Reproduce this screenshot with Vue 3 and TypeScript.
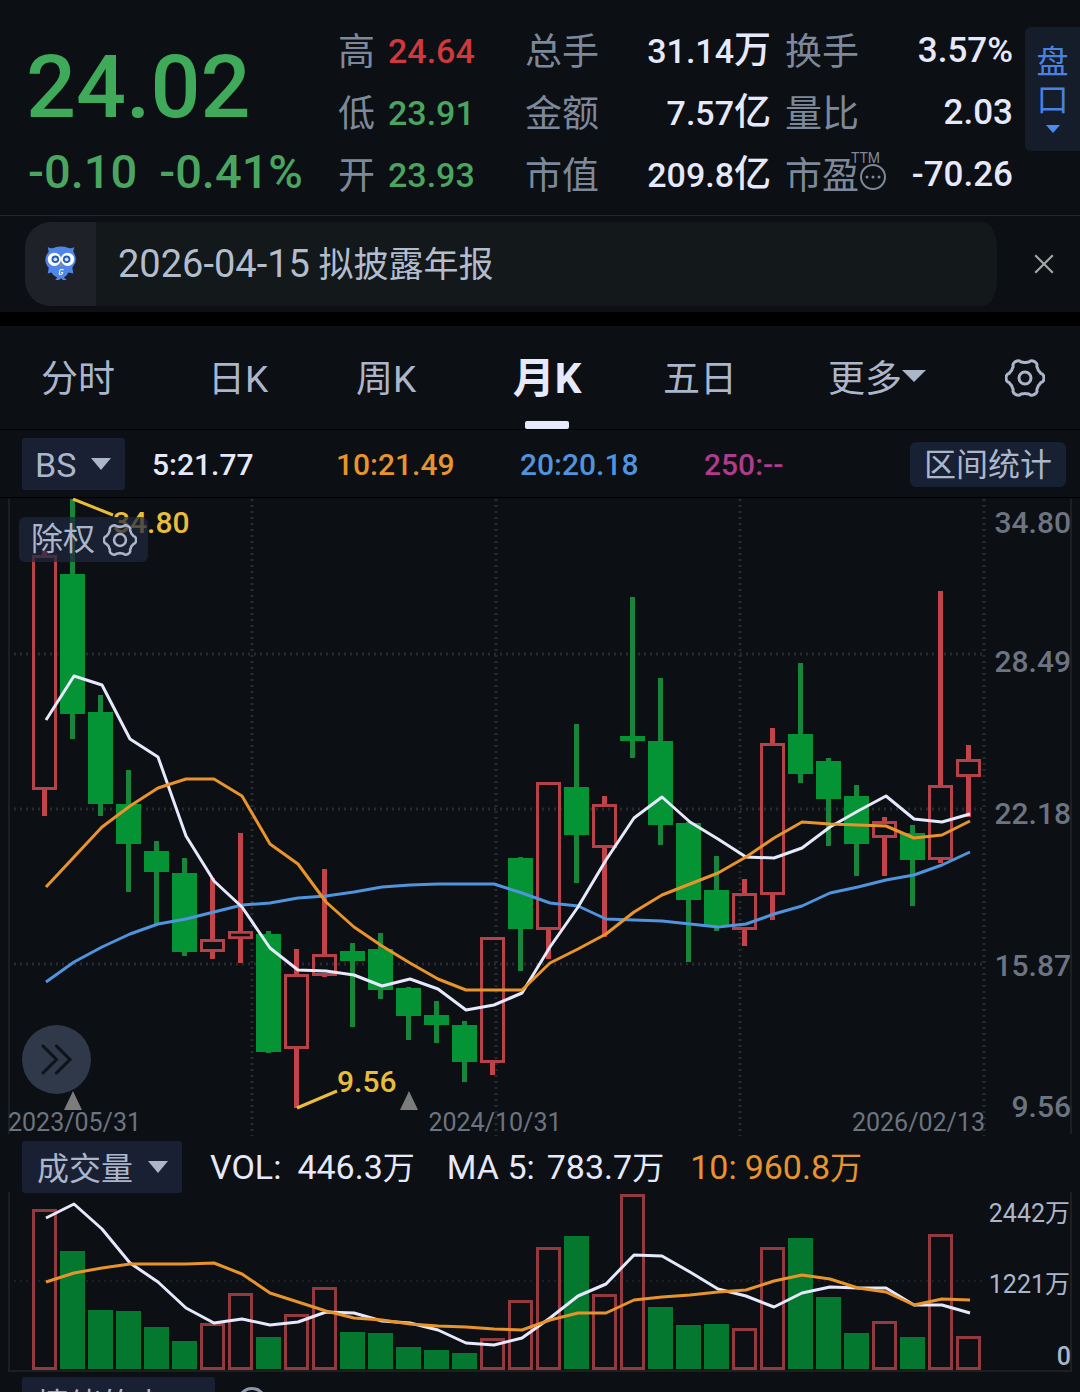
<script setup lang="ts">
import { ref } from 'vue'

type Candle = [up: 0 | 1, high: number, top: number, bottom: number, low: number]
type Volume = [up: 0 | 1, top: number]

const STEP = 28
const centre = (i: number): number => 44 + STEP * i

const candles: Candle[] = [
  [1, 551, 555, 790, 816], [0, 499, 574, 714, 739], [0, 695, 712, 804, 816], [0, 770, 804, 844, 892],
  [0, 841, 851, 872, 924], [0, 858, 873, 952, 956], [1, 878, 939, 952, 959], [1, 833, 931, 939, 963],
  [0, 931, 934, 1052, 1053], [1, 949, 974, 1049, 1108], [1, 869, 954, 976, 977], [0, 943, 951, 961, 1027],
  [0, 933, 949, 990, 999], [0, 987, 988, 1016, 1040], [0, 1001, 1015, 1025, 1043], [0, 1021, 1025, 1062, 1082],
  [1, 937, 937, 1063, 1075], [0, 857, 858, 929, 971], [1, 782, 782, 930, 959], [0, 724, 787, 835, 883],
  [1, 796, 804, 848, 937], [0, 597, 736, 741, 758], [0, 678, 741, 825, 845], [0, 822, 823, 900, 962],
  [0, 856, 890, 925, 931], [1, 879, 893, 930, 946], [1, 728, 743, 895, 920], [0, 663, 734, 774, 783],
  [0, 758, 761, 799, 846], [0, 785, 796, 844, 876], [1, 817, 821, 838, 876], [0, 825, 833, 860, 906],
  [1, 591, 785, 860, 863], [1, 745, 759, 777, 817],
]

const volumes: Volume[] = [
  [1, 1209], [0, 1251], [0, 1310], [0, 1311], [0, 1327], [0, 1341], [1, 1323], [1, 1293], [0, 1337],
  [1, 1314], [1, 1287], [0, 1332], [0, 1333], [0, 1347], [0, 1350], [0, 1353], [1, 1338], [1, 1300],
  [1, 1247], [0, 1236], [1, 1294], [1, 1194], [0, 1307], [0, 1325], [0, 1324], [1, 1328], [1, 1247],
  [0, 1238], [0, 1297], [0, 1333], [1, 1321], [0, 1337], [1, 1234], [1, 1336],
]

const line = (ys: number[]): string => ys.map((y, i) => `${46 + STEP * i},${y}`).join(' ')

const priceLines = [
  { name: 'ma20', points: line([982, 962, 947, 934, 924, 919, 912, 905, 903, 898, 896, 892, 887, 885, 884, 884, 884, 893, 903, 906, 919, 920, 921, 924, 927, 924, 914, 906, 893, 887, 880, 875, 865, 852]) },
  { name: 'ma5', points: line([720, 676, 685, 739, 757, 836, 881, 907, 948, 970, 971, 975, 986, 979, 989, 1010, 1005, 993, 947, 907, 860, 818, 797, 822, 839, 857, 858, 848, 827, 811, 796, 819, 822, 814]) },
  { name: 'ma10', points: line([887, 857, 827, 806, 788, 779, 779, 796, 844, 864, 902, 927, 946, 963, 979, 990, 990, 990, 963, 949, 934, 912, 895, 884, 873, 857, 838, 822, 824, 825, 826, 838, 835, 821]) },
]

const volumeLines = [
  { name: 'ma5', points: line([1218, 1204, 1229, 1263, 1282, 1308, 1323, 1319, 1325, 1322, 1312, 1313, 1321, 1323, 1330, 1343, 1345, 1338, 1318, 1296, 1284, 1255, 1256, 1272, 1289, 1296, 1307, 1293, 1287, 1288, 1288, 1305, 1305, 1313]) },
  { name: 'ma10', points: line([1282, 1273, 1268, 1264, 1264, 1264, 1263, 1274, 1293, 1302, 1311, 1318, 1320, 1324, 1326, 1327, 1329, 1330, 1320, 1313, 1313, 1300, 1297, 1295, 1292, 1290, 1281, 1275, 1279, 1288, 1292, 1305, 1299, 1300]) },
]

/* Outline of a hollow box, 3 units thick */
const hollow = (i: number, top: number, bottom: number): string => {
  const x = centre(i) - 12
  const t = Math.min(3, (bottom - top) / 3)
  return `M${x} ${top}h25v${bottom - top}h-25zM${x + 3} ${top + t}v${bottom - top - 2 * t}h19v${-(bottom - top - 2 * t)}z`
}

/* Six-lobed gear around (20, 20) */
const polar = (deg: number, r: number): string => {
  const a = (deg * Math.PI) / 180
  return `${(20 + r * Math.cos(a)).toFixed(2)} ${(20 + r * Math.sin(a)).toFixed(2)}`
}
const gear = 'M' + polar(-12, 18) + [0, 60, 120, 180, 240, 300]
  .map((a) => `Q${polar(a - 8, 19)} ${polar(a, 19)}Q${polar(a + 8, 19)} ${polar(a + 12, 18)}Q${polar(a + 16, 16)} ${polar(a + 22, 16)}Q${polar(a + 30, 15)} ${polar(a + 38, 16)}Q${polar(a + 44, 16)} ${polar(a + 48, 18)}`)
  .join('') + 'Z'

const priceScale = [
  { text: '34.80', y: 533 }, { text: '28.49', y: 672 }, { text: '22.18', y: 824 },
  { text: '15.87', y: 976 }, { text: '9.56', y: 1117 },
]

const range = [
  { label: '高', value: '24.64', cls: 'up' },
  { label: '低', value: '23.91', cls: 'down' },
  { label: '开', value: '23.93', cls: 'down' },
]
const totals = [
  { label: '总手', value: '31.14', unit: '万' },
  { label: '金额', value: '7.57', unit: '亿' },
  { label: '市值', value: '209.8', unit: '亿' },
]
const ratios = [
  { label: '换手', value: '3.57%', ttm: false },
  { label: '量比', value: '2.03', ttm: false },
  { label: '市盈', value: '-70.26', ttm: true },
]
const tabs = ['分时', '日K', '周K', '月K', '五日']
const activeTab = ref('月K')
const noticeOpen = ref(true)
const overlay = ref('BS')
const indicator = ref('成交量')
const sentiment = ref('情绪的点')
</script>

<template>
  <main class="quote">
    <header class="summary">
      <div class="price">
        <strong class="last">24.02</strong>
        <div class="change"><span>-0.10</span><span>-0.41%</span></div>
      </div>
      <dl class="stats range">
        <div v-for="s in range" :key="s.label"><dt>{{ s.label }}</dt><dd :class="s.cls">{{ s.value }}</dd></div>
      </dl>
      <dl class="stats totals">
        <div v-for="s in totals" :key="s.label"><dt>{{ s.label }}</dt><dd>{{ s.value }}<span class="unit">{{ s.unit }}</span></dd></div>
      </dl>
      <dl class="stats ratios">
        <div v-for="s in ratios" :key="s.label">
          <dt>{{ s.label }}<template v-if="s.ttm"><svg class="more-dots" viewBox="0 0 28 28" aria-hidden="true"><circle cx="14" cy="14" r="12" /><path d="M8 14h0M14 14h0M20 14h0" /></svg><small class="ttm">TTM</small></template></dt>
          <dd>{{ s.value }}</dd>
        </div>
      </dl>
      <button class="depth" type="button">
        <span>盘</span><span>口</span>
        <svg viewBox="0 0 14 8" aria-hidden="true"><path d="M0 0h14l-7 8z" /></svg>
      </button>
    </header>

    <section v-if="noticeOpen" class="notice">
      <div class="pill">
        <span class="owl">
          <svg viewBox="0 0 36 40" aria-hidden="true">
            <path class="body" d="M4 2q3 2 6 1q8-3 16 0q3 1 6-1l-1 5q4 6 2 12q-2 3-3 5l1 6l-5-1q-2 4-5 5l3 3h-4l-2-2l-2 2h-4l2-3q-4-1-6-5l-4 1l1-6q-2-2-3-5q-2-6 3-12z" />
            <circle class="rim" cx="11" cy="15" r="7" /><circle class="rim" cx="25" cy="15" r="7" />
            <circle class="iris" cx="12" cy="15" r="4" /><circle class="iris" cx="24" cy="15" r="4" />
            <circle class="glint" cx="12" cy="15" r="2" /><circle class="glint" cx="24" cy="15" r="2" />
            <path class="beak" d="M16 20h4l-2 4z" />
            <path class="mark" d="M21 26h-4l-1 5h3l1-2h-2" />
          </svg>
        </span>
        <p><time datetime="2026-04-15">2026-04-15</time> 拟披露年报</p>
      </div>
      <button class="close" type="button" aria-label="关闭" @click="noticeOpen = false">
        <svg viewBox="0 0 20 20" aria-hidden="true"><path d="M2 2l16 16M18 2L2 18" /></svg>
      </button>
    </section>

    <nav class="tabs">
      <button v-for="t in tabs" :key="t" type="button" :class="{ active: t === activeTab }" @click="activeTab = t">{{ t }}</button>
      <button type="button">更多<svg class="caret" viewBox="0 0 24 12" aria-hidden="true"><path d="M0 0h24l-12 12z" /></svg></button>
      <button class="settings" type="button" aria-label="设置">
        <svg class="gear" viewBox="0 0 40 40" aria-hidden="true"><path :d="gear" /><circle cx="20" cy="20" r="6" /></svg>
      </button>
    </nav>

    <section class="averages">
      <label class="picker bs">
        <select v-model="overlay" aria-label="叠加"><option>BS</option></select>
        <svg viewBox="0 0 20 12" aria-hidden="true"><path d="M0 0h20l-10 12z" /></svg>
      </label>
      <ul>
        <li class="c5">5:21.77</li>
        <li class="c10">10:21.49</li>
        <li class="c20">20:20.18</li>
        <li class="c250">250:--</li>
      </ul>
      <button class="interval" type="button">区间统计</button>
    </section>

    <section class="chart">
      <svg viewBox="0 498 1080 638" role="img" aria-label="月K">
        <path class="frame" d="M9 499V1134M1071 499V1134" />
        <path class="grid" d="M14 654H984M14 809H984M14 964H984M252 499V1136M496 499V1136M740 499V1136M984 499V1136" />
        <g v-for="([up, high, top, bottom, low], i) in candles" :key="i" :class="up ? 'rise' : 'fall'">
          <path class="wick" :d="`M${centre(i) - 2} ${high}h5V${top}h-5zM${centre(i) - 2} ${bottom}h5V${low}h-5z`" />
          <path v-if="up" class="box" :d="hollow(i, top, bottom)" />
          <rect v-else class="box" :x="centre(i) - 12" :y="top" width="25" :height="bottom - top" />
        </g>
        <polyline v-for="l in priceLines" :key="l.name" :class="l.name" :points="l.points" />
        <path class="leader" d="M73 499L113 515M297 1108L337 1091" />
        <text class="extreme" x="113" y="533">34.80</text>
        <text class="extreme" x="337" y="1092">9.56</text>
        <path class="event" d="M73 1091l9 19h-18zM409 1091l9 19h-18z" />
        <text v-for="p in priceScale" :key="p.text" class="scale" x="1071" :y="p.y">{{ p.text }}</text>
        <text class="date" x="8" y="1131">2023/05/31</text>
        <text class="date middle" x="495" y="1131">2024/10/31</text>
        <text class="date end" x="985" y="1131">2026/02/13</text>
      </svg>
      <button class="adjust" type="button">除权<svg class="gear" viewBox="0 0 40 40" aria-hidden="true"><path :d="gear" /><circle cx="20" cy="20" r="7" /></svg></button>
      <button class="expand" type="button" aria-label="展开">
        <svg viewBox="0 0 30 30" aria-hidden="true"><path d="M2 2l13 13L2 28M15 2l13 13L15 28" /></svg>
      </button>
    </section>

    <section class="volume-head">
      <label class="picker">
        <select v-model="indicator" aria-label="指标"><option>成交量</option></select>
        <svg viewBox="0 0 20 12" aria-hidden="true"><path d="M0 0h20l-10 12z" /></svg>
      </label>
      <p class="vol"><span>VOL:</span><span>446.3<span class="wan">万</span></span></p>
      <p class="vma5"><span>MA 5:</span><span>783.7<span class="wan">万</span></span></p>
      <p class="vma10"><span>10:</span><span>960.8<span class="wan">万</span></span></p>
    </section>

    <section class="chart">
      <svg viewBox="0 1192 1080 180" role="img" aria-label="成交量">
        <path class="frame" d="M9 1192V1371H1071V1192" />
        <path class="grid faint" d="M14 1281H984" />
        <g v-for="([up, top], i) in volumes" :key="i" :class="up ? 'rise' : 'fall'">
          <path v-if="up" class="bar" :d="hollow(i, top, 1370)" />
          <rect v-else class="bar" :x="centre(i) - 12" :y="top" width="25" :height="1369 - top" />
        </g>
        <polyline v-for="l in volumeLines" :key="l.name" :class="l.name" :points="l.points" />
        <text class="amount" x="1070" y="1222">2442万</text>
        <text class="amount" x="1070" y="1293">1221万</text>
        <text class="amount zero" x="1071" y="1365">0</text>
      </svg>
    </section>

    <section class="next">
      <label class="picker wide">
        <select v-model="sentiment" aria-label="副图指标"><option>情绪的点</option></select>
        <svg viewBox="0 0 20 12" aria-hidden="true"><path d="M0 0h20l-10 12z" /></svg>
      </label>
      <button class="help" type="button" aria-label="说明"></button>
    </section>
  </main>
</template>

<style>
body {
  background: #0c0f13;
}
</style>

<style scoped>
.quote {
  height: 100vh;
  overflow: hidden;
  background: #0c0f13;
  color: #e6e9fb;
  font-family: Roboto, "Noto Sans CJK SC", sans-serif;
}
button,
select {
  margin: 0;
  padding: 0;
  border: 0;
  background: none;
  color: inherit;
  font: inherit;
}
dl,
dd,
p,
ul {
  margin: 0;
  padding: 0;
  list-style: none;
}
svg {
  display: block;
  fill: none;
}

.summary {
  display: grid;
  grid-template-columns: 312fr 187fr 260fr 240fr 55px;
  box-sizing: border-box;
  height: 216px;
  padding-left: 26px;
  border-bottom: 1px solid #24282b;
}
.price {
  color: #3fab5a;
}
.last {
  display: block;
  padding-top: 32px;
  font-size: 88px;
  font-weight: 500;
  line-height: 110px;
}
.change {
  display: flex;
  gap: 22px;
  padding-left: 2px;
  font-size: 47px;
  font-weight: 500;
  line-height: 60px;
  color: #4aa560;
}
.stats {
  padding-top: 20px;
}
.stats div {
  display: flex;
  justify-content: space-between;
  height: 62px;
  line-height: 62px;
}
.stats dt {
  position: relative;
  display: flex;
  align-items: center;
  padding-top: 4px;
  font-size: 37px;
  line-height: 58px;
  color: #7d899a;
}
.stats dd {
  font-size: 34px;
  font-weight: 500;
}
.range div {
  justify-content: flex-start;
  gap: 13px;
}
.totals {
  padding-right: 14px;
}
.ratios {
  padding-right: 12px;
}
.ratios dd {
  font-size: 35px;
}
.up {
  color: #d0383c;
}
.down {
  color: #4aa560;
}
.unit {
  font-size: 37px;
}
.more-dots {
  width: 28px;
  height: 28px;
  stroke: #7d899a;
  stroke-width: 2;
}
.more-dots path {
  stroke-width: 3;
  stroke-linecap: round;
}
.ttm {
  position: absolute;
  top: 6px;
  right: 7px;
  font-size: 14px;
  line-height: 16px;
}
.depth {
  display: flex;
  flex-direction: column;
  align-items: center;
  align-self: start;
  margin-top: 27px;
  padding-top: 16px;
  height: 124px;
  border-radius: 6px 0 0 6px;
  background: #151c2a;
  color: #4a82e2;
  font-size: 32px;
  line-height: 38px;
}
.depth svg {
  width: 14px;
  margin-top: 6px;
  fill: #4a8cf5;
}

.notice {
  display: flex;
  align-items: center;
  box-sizing: border-box;
  height: 110px;
  padding: 6px 25px;
  border-bottom: 14px solid #000;
}
.pill {
  display: flex;
  flex: 1;
  height: 84px;
  overflow: hidden;
  border-radius: 26px 14px 14px 26px / 26px 26px 26px 26px;
  background: #13181b;
  color: #b3bdce;
}
.owl {
  display: grid;
  place-items: center;
  width: 71px;
  background: #1e2228;
}
.owl svg {
  width: 34px;
  height: 38px;
}
.body {
  fill: #4f86e8;
}
.rim {
  fill: #fff;
}
.iris {
  fill: #2459b8;
}
.glint {
  fill: #cfe0ff;
}
.beak {
  fill: #8d8a92;
}
.mark {
  stroke: #fff;
  stroke-width: 1;
}
.pill p {
  padding-left: 22px;
  font-size: 35px;
  line-height: 84px;
}
.pill time {
  font-size: 38px;
}
.close {
  width: 22px;
  margin-left: 36px;
}
.close svg {
  width: 22px;
  stroke: #a5a5a5;
  stroke-width: 2;
}

.tabs {
  display: grid;
  grid-template-columns: 156fr 164fr 132fr 190fr 116fr 238fr 58fr 26fr;
  height: 103px;
  border-bottom: 1px solid #000;
  color: #abb6cb;
  font-size: 37px;
}
.tabs button {
  position: relative;
  display: flex;
  align-items: center;
  justify-content: center;
  padding-bottom: 3px;
  white-space: nowrap;
}
.tabs .settings {
  padding: 0;
}
.tabs .active {
  padding-bottom: 6px;
  color: #e6e9fb;
  font-size: 42px;
  font-weight: 700;
}
.tabs .active::after {
  content: "";
  position: absolute;
  bottom: 0;
  width: 44px;
  height: 8px;
  border-radius: 2px;
  background: #e6e9fb;
}
.caret {
  width: 24px;
  fill: #abb6cb;
}
.gear {
  stroke: #abb6cb;
  stroke-width: 3;
}
.tabs .gear {
  width: 40px;
  height: 40px;
}

.averages {
  display: flex;
  align-items: center;
  box-sizing: border-box;
  height: 68px;
  padding: 0 14px 0 22px;
  border-bottom: 1px solid #000;
}
.picker {
  display: flex;
  align-items: center;
  position: relative;
  width: 160px;
  height: 52px;
  border-radius: 3px;
  background: #1a2033;
  color: #abb6cb;
}
.picker select {
  width: 100%;
  height: 52px;
  padding: 4px 0 0 15px;
  appearance: none;
  font-size: 32px;
}
.picker svg {
  position: absolute;
  right: 14px;
  width: 20px;
  fill: #abb6cb;
  pointer-events: none;
}
.picker.bs {
  width: 103px;
}
.picker.bs select {
  padding: 2px 0 0 13px;
  font-size: 34px;
}
.picker.wide {
  width: 193px;
}
.averages ul {
  display: grid;
  flex: 1;
  grid-template-columns: repeat(4, 1fr);
  margin: 2px 22px 0 27px;
  font-size: 30px;
  font-weight: 500;
}
.c10 {
  color: #e8942c;
}
.c20 {
  color: #4f94dd;
}
.c250 {
  color: #b03a8c;
}
.interval {
  width: 156px;
  height: 45px;
  margin-top: 2px;
  border-radius: 6px;
  background: #182033;
  color: #abb6cb;
  font-size: 32px;
  line-height: 47px;
}

.chart {
  position: relative;
}
.chart > svg {
  width: 100%;
}
.frame {
  stroke: #1c2025;
  stroke-width: 2;
}
.grid {
  stroke: #272a2f;
  stroke-width: 3;
  stroke-dasharray: 2 4;
}
.faint {
  stroke: #1c2024;
  stroke-width: 2;
}
.rise .wick {
  fill: #c2444a;
}
.rise .box {
  fill: #b44248;
}
.fall .wick {
  fill: #17853c;
}
.fall .box {
  fill: #049335;
}
.rise .bar {
  fill: #933a40;
}
.fall .bar {
  fill: #04782e;
}
polyline {
  stroke-width: 3;
  stroke-linejoin: round;
}
.ma5 {
  stroke: #e6e9fb;
}
.ma10 {
  stroke: #e8942c;
}
.ma20 {
  stroke: #4f94dd;
}
.leader {
  stroke: #e8bd3c;
  stroke-width: 3;
}
.extreme {
  fill: #e8bd3c;
  font-size: 30px;
  font-weight: 500;
}
.event {
  fill: #7c7c7c;
}
.scale {
  fill: #6c7481;
  font-size: 30px;
  font-weight: 500;
  text-anchor: end;
}
.date {
  fill: #6c7481;
  font-size: 25px;
}
.middle {
  text-anchor: middle;
}
.end {
  text-anchor: end;
}
.amount {
  fill: #abb6cb;
  font-size: 25px;
  text-anchor: end;
}
.zero {
  font-weight: 500;
}
.adjust {
  position: absolute;
  top: 19px;
  left: 19px;
  display: flex;
  align-items: center;
  gap: 8px;
  height: 45px;
  padding: 0 11px 0 12px;
  border-radius: 6px;
  background: rgba(30, 39, 62, 0.72);
  color: #abb6cb;
  font-size: 32px;
  line-height: 49px;
}
.adjust .gear {
  width: 34px;
  height: 34px;
}
.expand {
  position: absolute;
  top: 527px;
  left: 22px;
  display: grid;
  place-items: center;
  width: 69px;
  height: 69px;
  border-radius: 50%;
  background: #2f3949;
}
.expand svg {
  width: 31px;
  stroke: #0f141b;
  stroke-width: 3;
  stroke-linecap: round;
}

.volume-head {
  display: flex;
  align-items: center;
  height: 56px;
  padding: 6px 0 0 22px;
  box-sizing: border-box;
  font-size: 34px;
  white-space: nowrap;
}
.volume-head p {
  display: flex;
  align-items: baseline;
  gap: 12px;
  margin-left: 32px;
  padding-bottom: 4px;
}
.volume-head .vol {
  gap: 16px;
  margin-left: 28px;
}
.volume-head .wan {
  font-size: 32px;
}
.volume-head .vma10 {
  gap: 8px;
  margin-left: 26px;
  color: #e8942c;
}

.next {
  display: flex;
  gap: 22px;
  padding: 5px 22px;
}
.help {
  width: 30px;
  height: 30px;
  margin-top: 10px;
  border: 3px solid #8d97a8;
  border-radius: 50%;
}
</style>
